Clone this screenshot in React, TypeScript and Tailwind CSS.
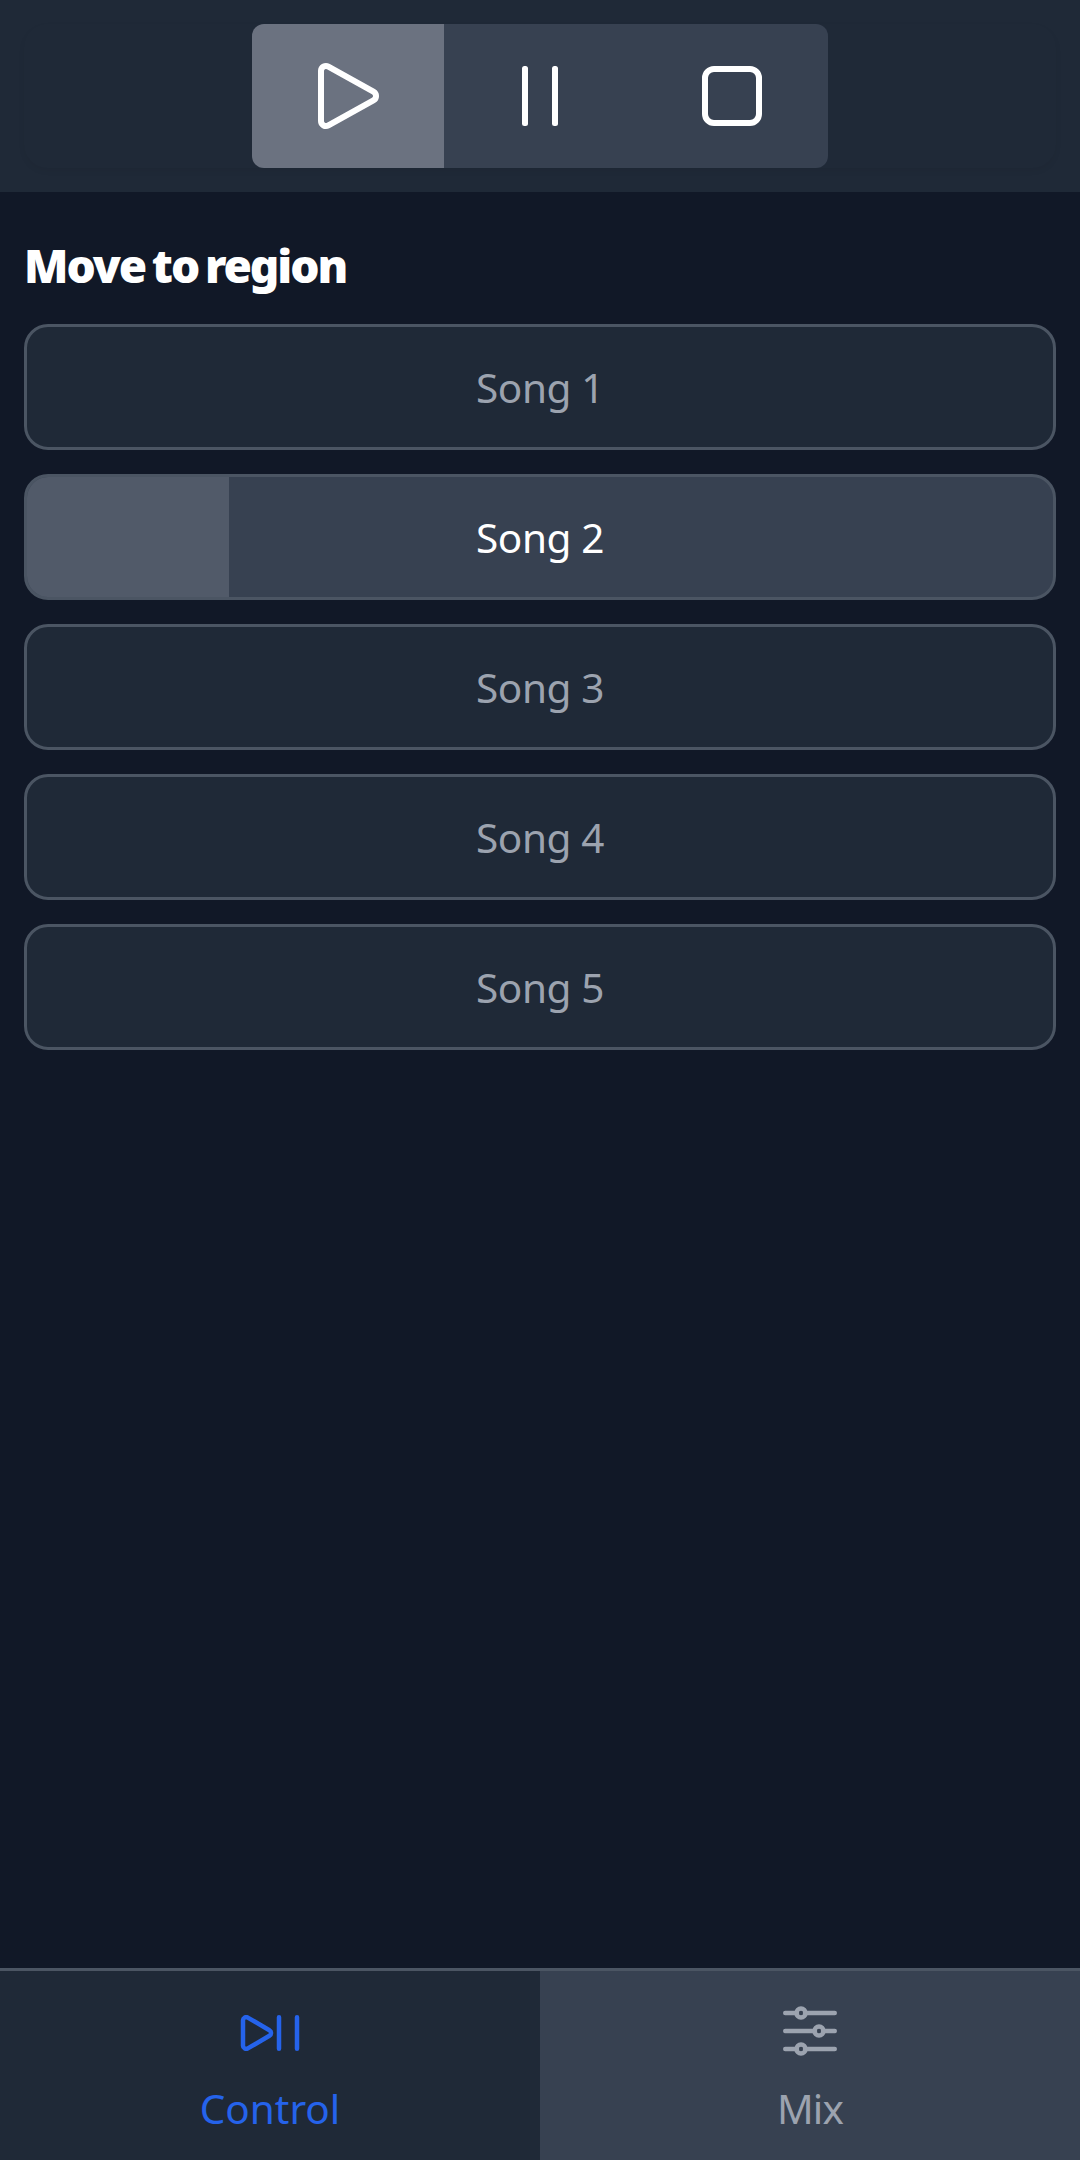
import type { ReactNode } from 'react';

function PlayIcon() {
  return (
    <svg className="size-18" viewBox="0 0 72 72" fill="none" stroke="currentColor" strokeWidth="6">
      <path d="M9 11A5 5 0 0 1 16.4 6.6L61.4 31.6A5 5 0 0 1 61.4 40.4L16.4 65.4A5 5 0 0 1 9 61Z" />
    </svg>
  );
}

function PauseIcon() {
  return (
    <svg className="size-18" viewBox="0 0 72 72" fill="currentColor">
      <rect x="18" y="6" width="6" height="60" rx="2.5" />
      <rect x="48" y="6" width="6" height="60" rx="2.5" />
    </svg>
  );
}

function StopIcon() {
  return (
    <svg className="size-18" viewBox="0 0 72 72" fill="none" stroke="currentColor" strokeWidth="6">
      <rect x="9" y="9" width="54" height="54" rx="9" />
    </svg>
  );
}

function ControlIcon() {
  return (
    <svg className="h-9 w-[60px]" viewBox="0 0 60 36" fill="none" stroke="currentColor" strokeWidth="4.5">
      <path d="M3 5.4A3.2 3.2 0 0 1 7.8 2.6L29.4 15.2A3.2 3.2 0 0 1 29.4 20.8L7.8 33.4A3.2 3.2 0 0 1 3 30.6Z" />
      <path d="M39 2.25V33.75M57 2.25V33.75" strokeLinecap="round" />
    </svg>
  );
}

function MixIcon() {
  return (
    <svg className="h-[50px] w-[54px]" viewBox="0 0 54 50" fill="none" stroke="currentColor" strokeWidth="4.5" strokeLinecap="round">
      <path d="M2.25 7H14M22 7H51.75M2.25 25H32M40 25H51.75M2.25 43H14M22 43H51.75" />
      <circle cx="18" cy="7" r="4.5" />
      <circle cx="36" cy="25" r="4.5" />
      <circle cx="18" cy="43" r="4.5" />
    </svg>
  );
}

function TransportButton({ label, active, children }: { label: string; active?: boolean; children: ReactNode }) {
  return (
    <button
      aria-label={label}
      className={`flex h-36 w-48 items-center justify-center text-white ${active ? 'bg-[#6b7280]' : 'bg-[#374151]'}`}
    >
      {children}
    </button>
  );
}

const regions = [
  { name: 'Song 1' },
  { name: 'Song 2', progress: 19.7 },
  { name: 'Song 3' },
  { name: 'Song 4' },
  { name: 'Song 5' },
];

function Region({ name, progress }: { name: string; progress?: number }) {
  const active = progress !== undefined;
  return (
    <button
      className={`relative flex h-[126px] w-full items-center justify-center overflow-hidden rounded-3xl border-3 border-[#4b5563] pt-0.5 text-[40.5px] leading-[60px] tracking-[-0.4px] ${
        active ? 'bg-[#374151] text-white' : 'bg-[#1f2937] text-[#9ca3af]'
      }`}
    >
      {active && <span className="absolute inset-y-0 left-0 bg-[#515a69]" style={{ width: `${progress}%` }} />}
      <span className="relative">{name}</span>
    </button>
  );
}

export default function App() {
  return (
    <div className="flex h-[2160px] w-[1080px] flex-col overflow-hidden bg-[#111827] font-['Noto_Sans',sans-serif]">
      <header className="h-48 bg-[#1f2937] p-6">
        <div className="flex h-36 justify-center rounded-3xl shadow-[0_3px_6px_rgba(0,0,0,0.05)]">
          <div className="flex overflow-hidden rounded-xl">
            <TransportButton label="Play" active>
              <PlayIcon />
            </TransportButton>
            <TransportButton label="Pause">
              <PauseIcon />
            </TransportButton>
            <TransportButton label="Stop">
              <StopIcon />
            </TransportButton>
          </div>
        </div>
      </header>
      <main className="flex-1 px-6 pt-[37px]">
        <h1 className="h-[95px] text-[46px] leading-[72px] font-black tracking-[-2.1px] text-white [word-spacing:-3px]">
          Move to region
        </h1>
        <div className="flex flex-col gap-6">
          {regions.map((region) => (
            <Region key={region.name} {...region} />
          ))}
        </div>
      </main>
      <nav className="grid h-48 grid-cols-2 border-t-3 border-[#4b5563] text-[40.5px] leading-[60px]">
        <button className="flex flex-col items-center justify-start bg-[#1f2937] text-[#2563eb]">
          <span className="mt-11 flex h-9 items-center">
            <ControlIcon />
          </span>
          <span className="mt-7">Control</span>
        </button>
        <button className="flex flex-col items-center justify-start bg-[#374151] text-[#9ca3af]">
          <span className="mt-[35px] flex h-[50px] items-center">
            <MixIcon />
          </span>
          <span className="mt-[23px] tracking-[-0.8px]">Mix</span>
        </button>
      </nav>
    </div>
  );
}
